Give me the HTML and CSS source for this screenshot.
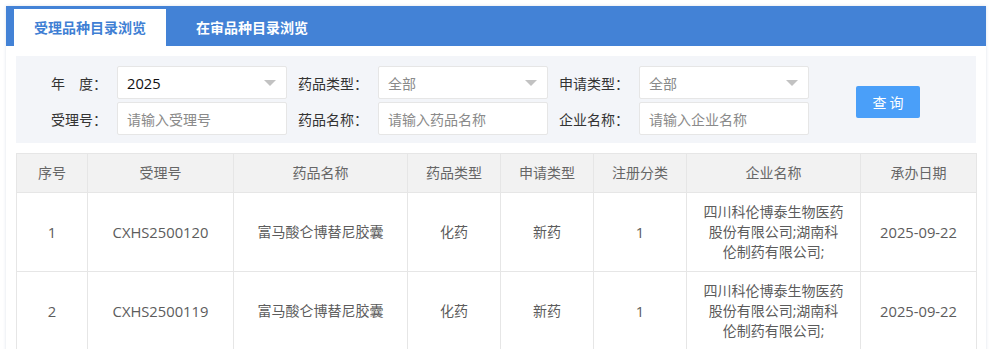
FILE: index.html
```html
<!DOCTYPE html>
<html lang="zh-CN">
<head>
<meta charset="utf-8">
<title>受理品种目录浏览</title>
<link rel="stylesheet" href="styles.css">
</head>
<body>
<div class="card">
  <div class="tabs">
    <div class="tab active">受理品种目录浏览</div>
    <div class="tab">在审品种目录浏览</div>
  </div>
  <div class="content">
    <div class="filter">
      <label class="lbl">年&emsp;度：</label>
      <div class="field select"><span class="val">2025</span></div>
      <label class="lbl">药品类型：</label>
      <div class="field select"><span class="ph">全部</span></div>
      <label class="lbl">申请类型：</label>
      <div class="field select"><span class="ph">全部</span></div>
      <button class="btn">查询</button>
      <label class="lbl">受理号：</label>
      <div class="field"><span class="ph">请输入受理号</span></div>
      <label class="lbl">药品名称：</label>
      <div class="field"><span class="ph">请输入药品名称</span></div>
      <label class="lbl">企业名称：</label>
      <div class="field"><span class="ph">请输入企业名称</span></div>
    </div>
    <table class="grid">
      <colgroup>
        <col class="c1"><col class="c2"><col class="c3"><col class="c4"><col class="c5"><col class="c6"><col class="c7"><col class="c8">
      </colgroup>
      <thead>
        <tr><th>序号</th><th>受理号</th><th>药品名称</th><th>药品类型</th><th>申请类型</th><th>注册分类</th><th>企业名称</th><th>承办日期</th></tr>
      </thead>
      <tbody>
        <tr><td class="num">1</td><td class="num">CXHS2500120</td><td>富马酸仑博替尼胶囊</td><td>化药</td><td>新药</td><td class="num">1</td><td class="co">四川科伦博泰生物医药股份有限公司;湖南科伦制药有限公司;</td><td class="num">2025-09-22</td></tr>
        <tr><td class="num">2</td><td class="num">CXHS2500119</td><td>富马酸仑博替尼胶囊</td><td>化药</td><td>新药</td><td class="num">1</td><td class="co">四川科伦博泰生物医药股份有限公司;湖南科伦制药有限公司;</td><td class="num">2025-09-22</td></tr>
      </tbody>
    </table>
  </div>
</div>
</body>
</html>
```
FILE: styles.css
```css
* { box-sizing: border-box; }
html, body { margin: 0; padding: 0; background: #fff; }
body {
  padding: 6px;
  font-family: "Open Sans", "Noto Sans CJK SC", sans-serif;
  font-size: 14px;
  color: #333;
}
.card {
  width: 980px;
  min-height: 400px;
  background: #fff;
  box-shadow: 0 0 3px rgba(60, 90, 140, 0.18);
}
.tabs {
  display: flex;
  gap: 10px;
  height: 40px;
  padding: 3px 8px 0;
  background: #4382d6;
}
.tab {
  height: 37px;
  line-height: 37px;
  padding: 0 20px;
  font-family: "Noto Sans CJK SC", sans-serif;
  font-weight: bold;
  font-size: 14px;
  color: #fff;
}
.tab.active {
  background: #fff;
  color: #3f7fd4;
}
.content { padding: 10px; }
.filter {
  display: grid;
  grid-template-columns: 91px 170px 91px 170px 91px 170px auto;
  grid-template-rows: 33px 33px;
  row-gap: 3px;
  padding: 10px 10px 8px;
  background: #f3f5f9;
}
.lbl {
  align-self: center;
  text-align: right;
  padding-right: 10px;
  font-family: "Noto Sans CJK SC", sans-serif;
  color: #333;
  line-height: 20px;
  white-space: nowrap;
}
.field {
  position: relative;
  display: flex;
  align-items: center;
  padding-left: 9px;
  background: #fff;
  border: 1px solid #e6e6e6;
  border-radius: 2px;
}
.select::after {
  content: "";
  position: absolute;
  right: 10px;
  top: 13px;
  border-left: 6px solid transparent;
  border-right: 6px solid transparent;
  border-top: 6px solid #c2c2c2;
}
.val { color: #111; font-size: 14.7px; }
.ph { color: #8a8a8a; font-family: "Noto Sans CJK SC", sans-serif; }
.btn {
  grid-column: 7;
  grid-row: 1 / span 2;
  align-self: center;
  justify-self: start;
  margin: 3px 0 0 47px;
  width: 64px;
  height: 32px;
  border: none;
  border-radius: 2px;
  background: #4a9ff9;
  color: #fff;
  font-family: "Noto Sans CJK SC", sans-serif;
  font-size: 14px;
  letter-spacing: 3px;
  padding: 0 0 0 3px;
}
.grid {
  margin-top: 10px;
  width: 960px;
  border-collapse: collapse;
  table-layout: fixed;
  border: 1px solid #e6e6e6;
}
.c1 { width: 71px; }
.c2 { width: 146px; }
.c3 { width: 174px; }
.c4 { width: 93px; }
.c5 { width: 93px; }
.c6 { width: 93px; }
.c7 { width: 174px; }
.c8 { width: 116px; }
th, td {
  border: 1px solid #e6e6e6;
  padding: 9px 15px;
  line-height: 20px;
  text-align: center;
  vertical-align: middle;
  font-weight: normal;
}
th { background: #f2f2f2; color: #666; }
td { color: #5c5c5c; }
td.num { font-size: 14.75px; }
td.co { padding: 9px 16px; }
```
